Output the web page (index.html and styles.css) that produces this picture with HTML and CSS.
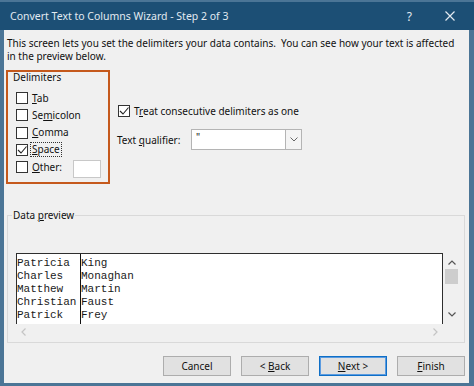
FILE: index.html
```html
<!DOCTYPE html>
<html>
<head>
<meta charset="utf-8">
<link rel="stylesheet" href="styles.css">
</head>
<body>
<div class="window">
  <div class="titlebar">
    <span class="title">Convert Text to Columns Wizard - Step 2 of 3</span>
    <span class="help">?</span>
    <svg class="close" width="10" height="10" viewBox="0 0 10 10"><path d="M0.5 0.5 L9.5 9.5 M9.5 0.5 L0.5 9.5" stroke="#e2eaf1" stroke-width="1.2" fill="none"/></svg>
  </div>
  <div class="frame">
    <p class="intro">This screen lets you set the delimiters your data contains.&nbsp; You can see how your text is affected<br>in the preview below.</p>
    <div class="top">
      <div class="delims">
        <div class="grp-label">Delimiters</div>
        <div class="cb-list">
          <div class="cb"><span class="box"></span><span class="lbl"><u>T</u>ab</span></div>
          <div class="cb"><span class="box"></span><span class="lbl">Se<u>m</u>icolon</span></div>
          <div class="cb"><span class="box"></span><span class="lbl"><u>C</u>omma</span></div>
          <div class="cb"><span class="box"><svg width="10" height="10" viewBox="0 0 10 10"><path d="M1 5 L4 8 L9.5 1.5" stroke="#222" stroke-width="1.1" fill="none"/></svg></span><span class="lbl focus"><u>S</u>pace</span></div>
          <div class="cb"><span class="box"></span><span class="lbl other-lbl"><u>O</u>ther:</span><span class="other-input"></span></div>
        </div>
      </div>
      <div class="opts">
        <div class="cb"><span class="box"><svg width="10" height="10" viewBox="0 0 10 10"><path d="M1 5 L4 8 L9.5 1.5" stroke="#222" stroke-width="1.1" fill="none"/></svg></span><span class="lbl">T<u>r</u>eat consecutive delimiters as one</span></div>
        <div class="qual">
          <span class="qual-lbl">Text <u>q</u>ualifier:</span>
          <div class="select"><span class="val">"</span><span class="drop"><svg width="8" height="5" viewBox="0 0 8 5"><path d="M0.5 0.5 L4 4 L7.5 0.5" stroke="#666" stroke-width="1" fill="none"/></svg></span></div>
        </div>
      </div>
    </div>
    <fieldset class="pv-group">
      <legend>Data <u>p</u>review</legend>
      <div class="pv">
        <div class="pane">
          <div class="col col1"><div>Patricia</div><div>Charles</div><div>Matthew</div><div>Christian</div><div>Patrick</div></div>
          <div class="col col2"><div>King</div><div>Monaghan</div><div>Martin</div><div>Faust</div><div>Frey</div></div>
        </div>
        <div class="vscroll">
          <svg class="up" width="8" height="5" viewBox="0 0 8 5"><path d="M0.5 4.5 L4 1 L7.5 4.5" stroke="#555" stroke-width="1.2" fill="none"/></svg>
          <span class="thumb"></span>
          <svg class="down" width="8" height="5" viewBox="0 0 8 5"><path d="M0.5 0.5 L4 4 L7.5 0.5" stroke="#555" stroke-width="1.2" fill="none"/></svg>
        </div>
        <div class="hscroll">
          <svg width="5" height="8" viewBox="0 0 5 8"><path d="M4.5 0.5 L1 4 L4.5 7.5" stroke="#c4c4c4" stroke-width="1.2" fill="none"/></svg>
          <svg width="5" height="8" viewBox="0 0 5 8"><path d="M0.5 0.5 L4 4 L0.5 7.5" stroke="#c4c4c4" stroke-width="1.2" fill="none"/></svg>
        </div>
        <div class="corner"></div>
      </div>
    </fieldset>
    <div class="buttons">
      <button class="btn">Cancel</button>
      <button class="btn">&lt; <u>B</u>ack</button>
      <button class="btn default"><u>N</u>ext &gt;</button>
      <button class="btn"><u>F</u>inish</button>
    </div>
  </div>
</div>
</body>
</html>
```

FILE: styles.css
```css
* { box-sizing: border-box; }
html, body { margin: 0; padding: 0; }
body {
  width: 474px;
  height: 386px;
  overflow: hidden;
  background: #4b7596;
  font-family: "Noto Sans", sans-serif;
  font-size: 10px;
  color: #111;
}
.window {
  width: 474px;
  height: 386px;
  display: flex;
  flex-direction: column;
}
.titlebar {
  height: 30px;
  flex: none;
  background: #1c4f75;
  border-top: 2px solid #4b7596;
  display: flex;
  align-items: center;
  padding-left: 10px;
  color: #e2eaf1;
}
.title { flex: 1; font-size: 10.5px; }
.help { font-size: 12px; margin-right: 33px; }
.close { margin-right: 19px; }
.frame {
  flex: 1;
  background: #f0f0f0;
  margin: 0 5px 3px 4px;
  display: flex;
  flex-direction: column;
}
.intro {
  margin: 7px 0 0 3px;
  line-height: 13px;
  white-space: nowrap;
}
.top {
  display: flex;
  margin-top: 7px;
}
.delims {
  margin-left: 2px;
  width: 104px;
  height: 114px;
  border: 2px solid #c5591c;
}
.grp-label {
  margin: -1px 0 0 5px;
  line-height: 13px;
}
.cb-list { margin: 5.5px 0 0 8px; }
.cb {
  display: flex;
  align-items: center;
  height: 17.25px;
}
.box {
  width: 12px;
  height: 12px;
  border: 1px solid #333;
  background: #fff;
  display: flex;
  align-items: center;
  justify-content: center;
  flex: none;
}
.lbl { margin-left: 4px; line-height: 13px; }
.focus { outline: 1px dotted #333; outline-offset: 0; padding: 0 1px; margin-left: 3px; }
.other-lbl { width: 41px; }
.other-input {
  width: 28px;
  height: 18px;
  background: #fff;
  border: 1px solid #c8c8c8;
  margin-top: 3px;
}
.opts {
  margin: 32.5px 0 0 8px;
}
.qual {
  display: flex;
  align-items: center;
  margin: 9.5px 0 0 -1px;
}
.qual-lbl { width: 74px; }
.select {
  width: 111px;
  height: 21px;
  background: #fff;
  border: 1px solid #b4b4b4;
  display: flex;
  justify-content: space-between;
}
.val { padding-left: 4px; line-height: 15px; }
.drop {
  width: 16px;
  border-left: 1px solid #b4b4b4;
  background: #f4f4f4;
  display: flex;
  align-items: center;
  justify-content: center;
}
.pv-group {
  margin: 25px 0 0 3px;
  width: 458px;
  border: 1px solid #d9d9d9;
  padding: 0 0 3px 0;
}
.pv-group legend {
  margin-left: 4px;
  padding: 0 1px;
  line-height: 13px;
}
.pv {
  margin: 31px 0 0 8px;
  display: grid;
  grid-template-columns: 427px 17px;
  grid-template-rows: 71px 15px;
}
.pane {
  background: #fff;
  border: 1px solid #2e2e2e;
  border-bottom: none;
  display: flex;
  font-family: "Liberation Mono", monospace;
  font-size: 11px;
  line-height: 13px;
  color: #1a1a1a;
  padding-top: 2.5px;
}
.col1 {
  width: 64px;
  border-right: 1px solid #111;
  margin-top: -2.5px;
  padding-top: 2.5px;
}
.vscroll {
  display: flex;
  flex-direction: column;
  align-items: center;
}
.vscroll .up { margin-top: 7px; }
.vscroll .thumb {
  width: 13px;
  height: 15px;
  background: #cdcdcd;
  margin-top: 4px;
}
.vscroll .down { margin-top: 28px; }
.hscroll {
  display: flex;
  justify-content: space-between;
  align-items: center;
  padding: 0 5px;
}
.buttons {
  display: flex;
  justify-content: flex-end;
  gap: 10px;
  margin: 13px 4px 0 0;
}
.btn {
  width: 68px;
  height: 20px;
  background: #e1e1e1;
  border: 1px solid #adadad;
  font-family: "Noto Sans", sans-serif;
  font-size: 10px;
  color: #111;
  padding: 0;
  line-height: 16px;
}
.btn.default {
  border: 1px solid #0f6fc6;
  box-shadow: inset 0 0 0 1px #5b9be0;
}
```
